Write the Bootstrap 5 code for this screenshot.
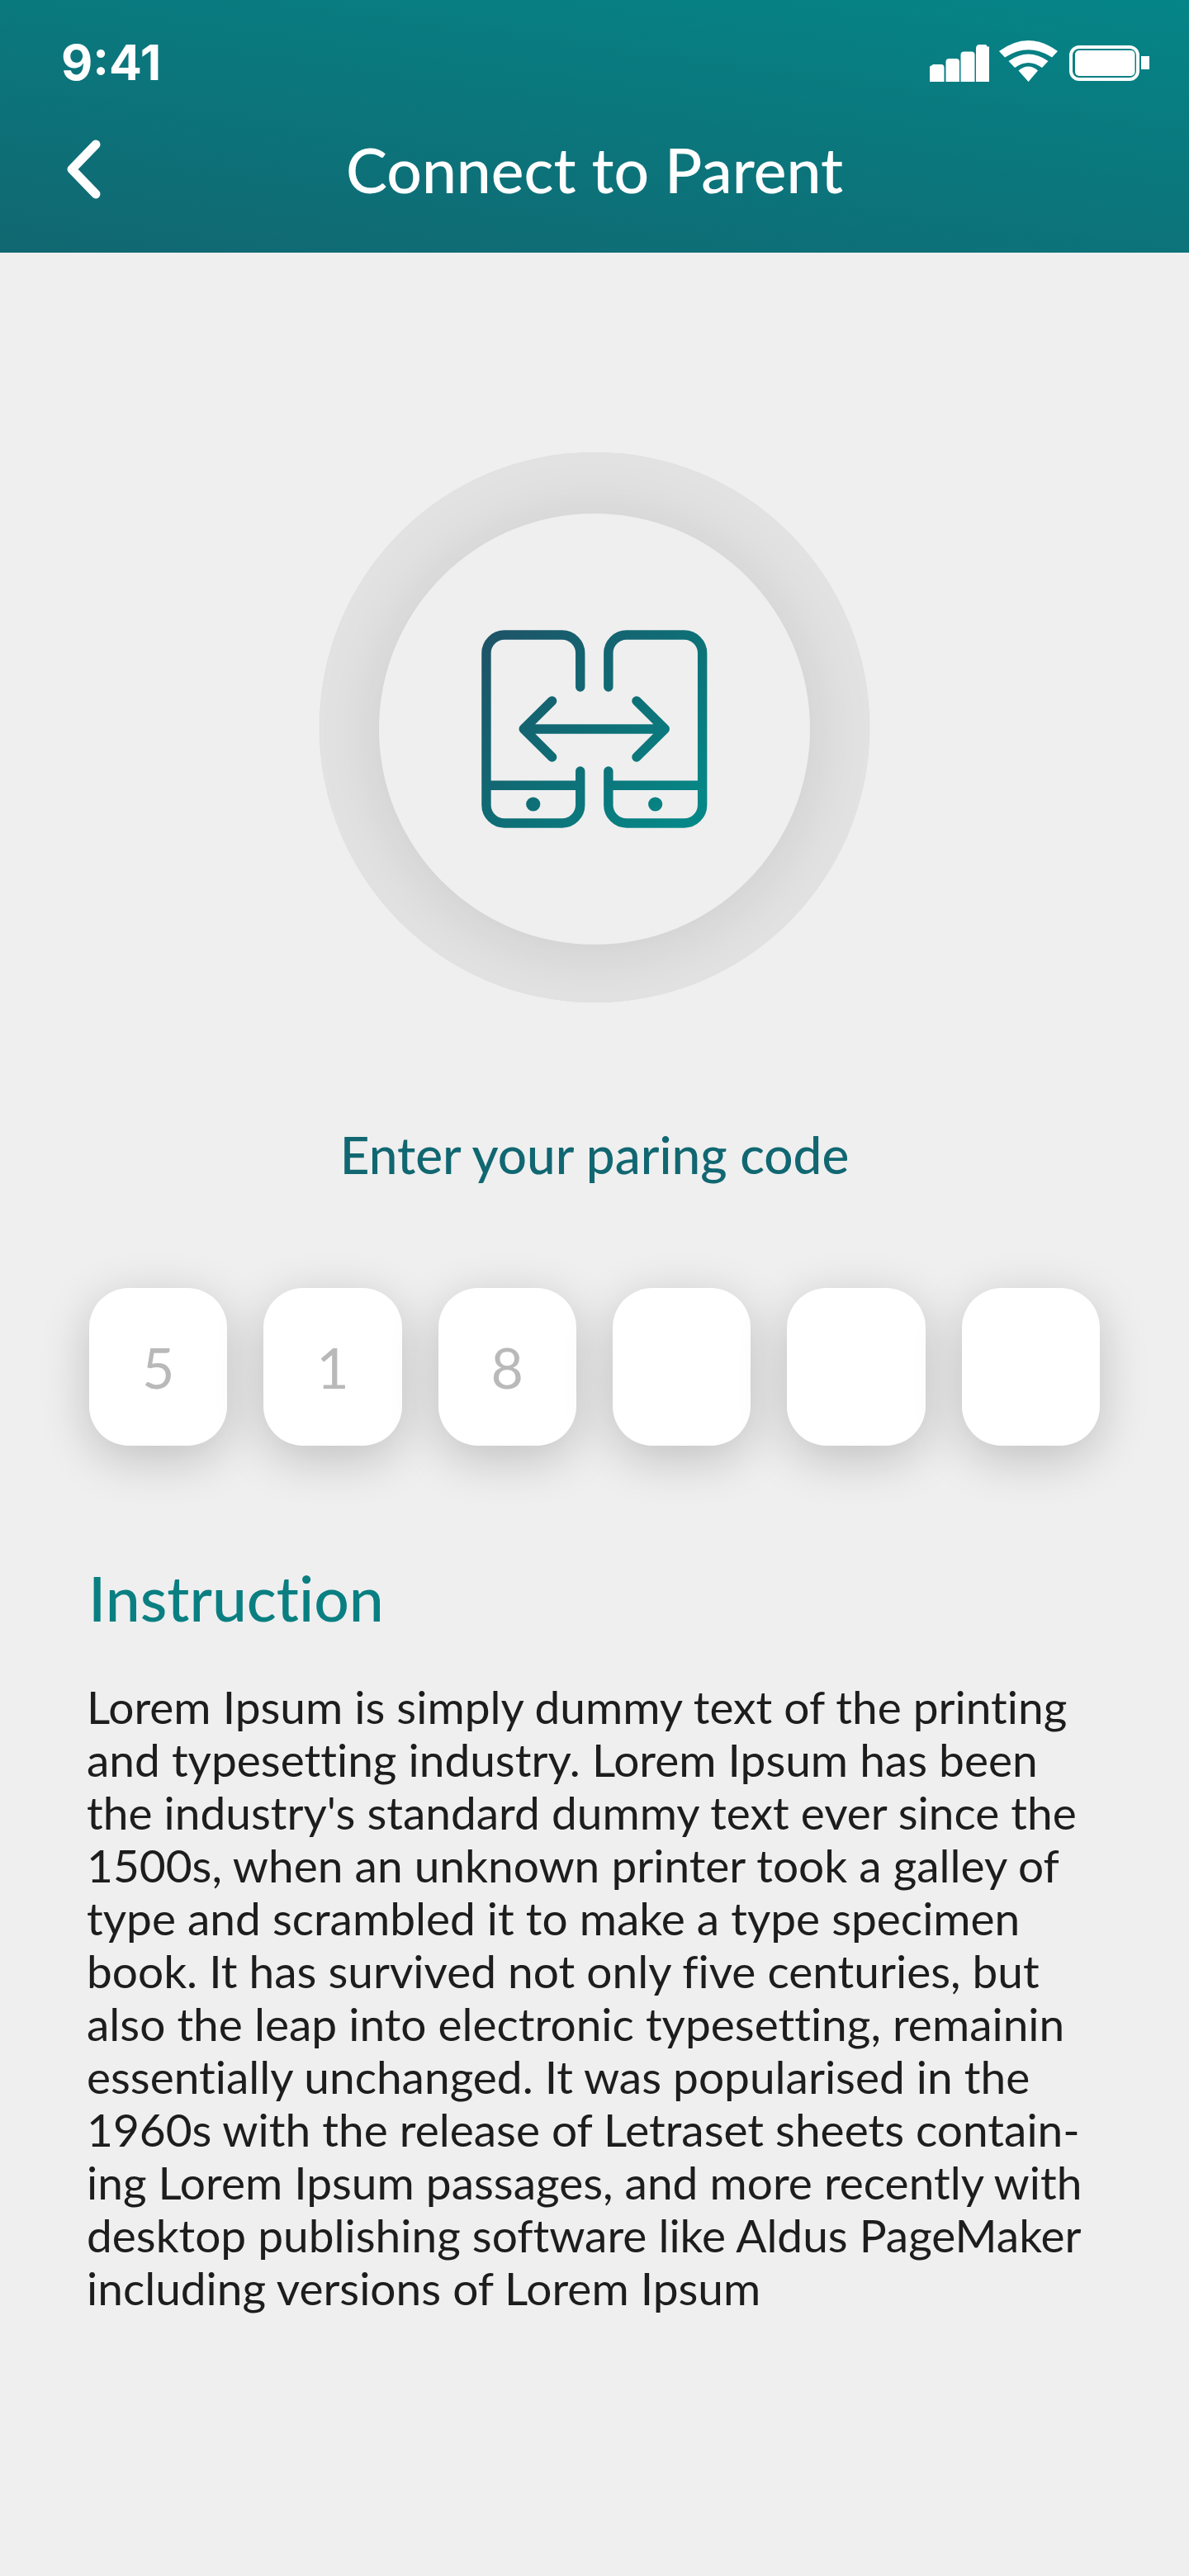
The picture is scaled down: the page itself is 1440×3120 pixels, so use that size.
<!DOCTYPE html>
<html lang="en">
<head>
<meta charset="utf-8">
<meta name="viewport" content="width=device-width, initial-scale=1">
<title>Connect to Parent</title>
<link href="https://cdn.jsdelivr.net/npm/bootstrap@5.3.0/dist/css/bootstrap.min.css" rel="stylesheet">
<style>
  body { background: #efefef; color: #1d1d1d; font-family: Lato, "Open Sans", sans-serif; font-variant-ligatures: none; }
  .app-header { background: linear-gradient(8deg, #116771, #058587); padding: 44px 0 52px; }
  .status-bar { padding: 0 48px 0 74px; margin-bottom: 48px; }
  .clock { font: 700 59px/64px Inter, sans-serif; }
  .title-bar { padding: 0 81px; }
  .title-bar h1 { font-size: 75px; line-height: 98px; font-weight: 500; }
  .title-side { width: 44px; }
  .app-main { padding: 242px 105px 120px; }
  .ring { width: 666px; aspect-ratio: 1; padding-top: 3px; background: #e2e2e2; box-shadow: 0 0 1px #cfcfcf; overflow: hidden; }
  .ring-inner { width: 522px; aspect-ratio: 1; background: #efefef; box-shadow: 0 6px 80px rgba(0, 0, 0, .1); }
  .prompt { color: #116771; font-size: 62px; line-height: 80px; font-weight: 500; margin: 144px 0 122px; }
  .code-row { gap: 44px; padding: 0 3px; }
  .code-box { min-width: 0; flex: 1 1 0; height: 191px; border: 0; border-radius: 48px; background: #fff; color: #b9b9b9; font-size: 68px; text-align: center; padding: 0; position: relative; box-shadow: 0 15px 60px rgba(0, 0, 0, .2); }
  .section-title { color: #0a7f82; font-size: 75px; line-height: 96px; font-weight: 500; margin: 136px 0 52px; padding-left: 2px; }
  .body-copy { font-size: 55px; line-height: 64px; font-weight: 400; }
</style>
</head>
<body>
<header class="app-header text-white">
  <div class="status-bar d-flex justify-content-between align-items-start">
    <span class="clock">9:41</span>
    <svg width="266" height="58" viewBox="0 -5 266 58" fill="#fff" role="img" aria-label="Signal, Wi-Fi and battery">
      <path d="M0 50V31.500l2-1 2-1.500h10q3.500 0 3.500 4v17zM19.500 50V26q0-4 4-4h8.500q4 0 4 4v24zM37.500 50V17.500q0-4 4-4h9q4 0 4 4v32.500zM56 50V10q0-5 4.500-5h7q2 0 2 2.500h2.500V50z"/>
      <path d="M84 13Q119.500-13 155 13L148 20.500Q119.500 2 91 20.500zM95.500 25Q119.500 8 143.500 25L136 33Q119.500 21 103 33zM107.500 36.500Q119.500 26.500 131 36.500L119.500 50z"/>
      <rect x="171" y="8" width="81" height="39" rx="10" fill="none" stroke="#fff" stroke-width="4"/>
      <rect x="176" y="12" width="72.500" height="31" rx="5"/>
      <path d="M256 19h10v16h-10z"/>
    </svg>
  </div>
  <div class="title-bar d-flex align-items-center">
    <button type="button" class="title-side btn p-0 border-0 text-start lh-1" aria-label="Back">
      <svg class="d-block" width="41" height="72" viewBox="0 0 41 72" fill="none" stroke="#fff" stroke-width="11" stroke-linecap="round" stroke-linejoin="round"><path d="M35 6L6 36L35 66"/></svg>
    </button>
    <h1 class="flex-fill text-center m-0">Connect to Parent</h1>
    <span class="title-side"></span>
  </div>
</header>

<main class="app-main">
  <div class="ring rounded-circle mx-auto d-flex align-items-center justify-content-center">
    <div class="ring-inner rounded-circle d-flex align-items-center justify-content-center">
      <svg width="274" height="240" viewBox="24 23.500 273.500 240" fill="none" stroke="url(#teal)" stroke-width="11.400" stroke-linecap="round" stroke-linejoin="round" role="img" aria-label="Two phones exchanging data">
        <defs>
          <linearGradient id="teal" gradientUnits="userSpaceOnUse" x1="40" y1="30" x2="270" y2="250">
            <stop offset="0" stop-color="#1d5468"/><stop offset=".5" stop-color="#0f6d75"/><stop offset="1" stop-color="#068787"/>
          </linearGradient>
        </defs>
        <path d="M143.500 92.500V51.500a22 22 0 0 0-22-22H51.700a22 22 0 0 0-22 22v184a22 22 0 0 0 22 22h69.800a22 22 0 0 0 22-22v-41M29.700 211.800H143.500"/>
        <path d="M177.600 92.500V51.500a22 22 0 0 1 22-22h69.800a22 22 0 0 1 22 22v184a22 22 0 0 1-22 22h-69.800a22 22 0 0 1-22-22v-41M177.600 211.800H291.400"/>
        <path d="M75 143.400L109.400 109.400M75 143.400L109.400 177.500M75 143.300L246 143.500M246 143.400L211.700 109.400M246 143.400L211.700 177.500"/>
        <g stroke="none" fill="url(#teal)"><circle cx="86.500" cy="234.500" r="8.600"/><circle cx="234.400" cy="234.500" r="8.600"/></g>
      </svg>
    </div>
  </div>

  <form>
    <p class="prompt text-center" id="code-label">Enter your paring code</p>
    <div class="code-row d-flex" role="group" aria-labelledby="code-label">
      <input class="code-box" type="text" inputmode="numeric" maxlength="1" value="5" aria-label="Digit 1">
      <input class="code-box" type="text" inputmode="numeric" maxlength="1" value="1" aria-label="Digit 2">
      <input class="code-box" type="text" inputmode="numeric" maxlength="1" value="8" aria-label="Digit 3">
      <input class="code-box" type="text" inputmode="numeric" maxlength="1" aria-label="Digit 4">
      <input class="code-box" type="text" inputmode="numeric" maxlength="1" aria-label="Digit 5">
      <input class="code-box" type="text" inputmode="numeric" maxlength="1" aria-label="Digit 6">
    </div>
  </form>

  <section>
    <h2 class="section-title">Instruction</h2>
    <p class="body-copy m-0">Lorem Ipsum is simply dummy text of the printing<br>
      and typesetting industry. Lorem Ipsum has been<br>
      the industry's standard dummy text ever since the<br>
      1500s, when an unknown printer took a galley of<br>
      type and scrambled it to make a type specimen<br>
      book. It has survived not only five centuries, but<br>
      also the leap into electronic typesetting, remainin<br>
      essentially unchanged. It was popularised in the<br>
      1960s with the release of Letraset sheets contain-<br>
      ing Lorem Ipsum passages, and more recently with<br>
      desktop publishing software like Aldus PageMaker<br>
      including versions of Lorem Ipsum</p>
  </section>
</main>
<script src="https://cdn.jsdelivr.net/npm/bootstrap@5.3.0/dist/js/bootstrap.bundle.min.js"></script>
</body>
</html>
